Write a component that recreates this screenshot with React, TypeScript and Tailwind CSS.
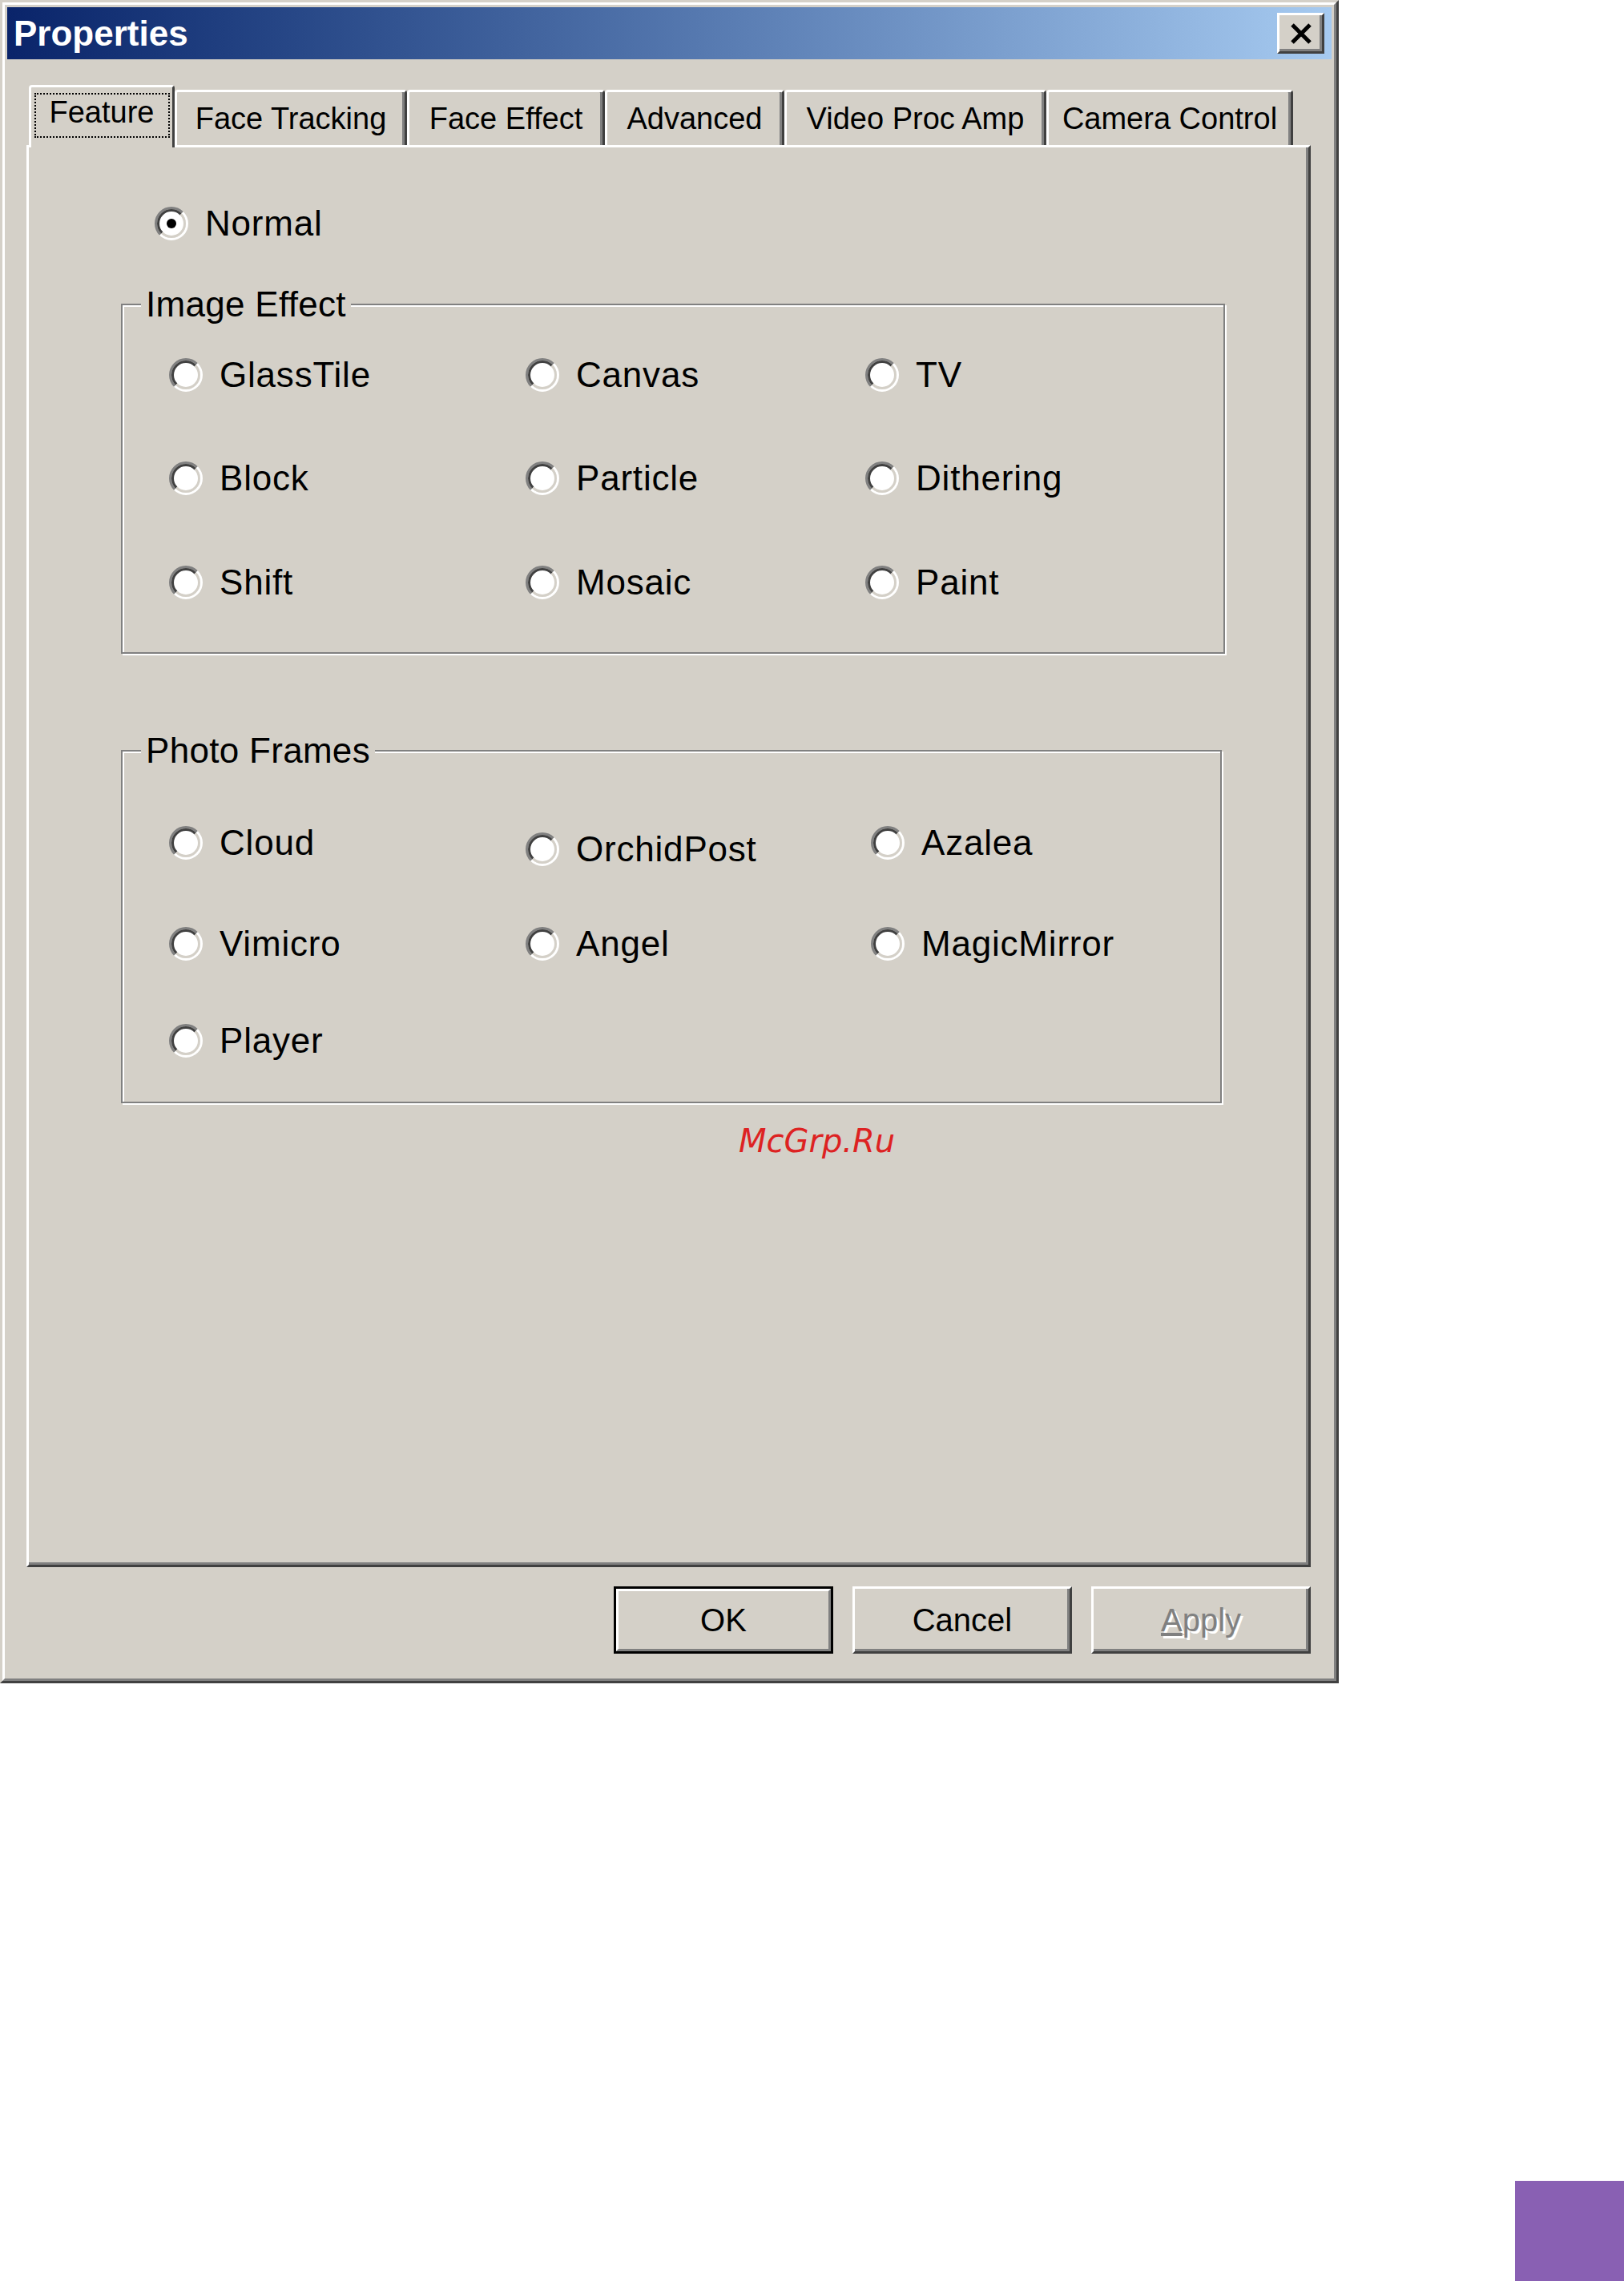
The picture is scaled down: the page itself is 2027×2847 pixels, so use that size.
import React from 'react';

type Tab = { label: string; width: string };

const tabs: Tab[] = [
  { label: 'Face Tracking', width: 'w-[290px]' },
  { label: 'Face Effect', width: 'w-[247px]' },
  { label: 'Advanced', width: 'w-[224px]' },
  { label: 'Video Proc Amp', width: 'w-[327px]' },
  { label: 'Camera Control', width: 'w-[308px]' },
];

type Row = { items: { label: string; nudge?: boolean }[]; gap: string };

const imageEffectRows: Row[] = [
  { items: [{ label: 'GlassTile' }, { label: 'Canvas' }, { label: 'TV' }], gap: 'mt-[38px]' },
  { items: [{ label: 'Block' }, { label: 'Particle' }, { label: 'Dithering' }], gap: 'mt-[79px]' },
  { items: [{ label: 'Shift' }, { label: 'Mosaic' }, { label: 'Paint' }], gap: 'mt-[80px]' },
];

const photoFrameRows: Row[] = [
  { items: [{ label: 'Cloud' }, { label: 'OrchidPost', nudge: true }, { label: 'Azalea' }], gap: 'mt-[65px]' },
  { items: [{ label: 'Vimicro' }, { label: 'Angel' }, { label: 'MagicMirror' }], gap: 'mt-[76px]' },
  { items: [{ label: 'Player' }], gap: 'mt-[71px]' },
];

// classic win2k radio: sunken ring, white well
function Radio({ checked }: { checked?: boolean }) {
  return (
    <svg width="42" height="42" viewBox="0 0 42 42" className="shrink-0">
      <circle cx="21" cy="21" r="18" fill="#ffffff" />
      <path d="M7.21 34.79 A19.5 19.5 0 0 1 34.79 7.21" fill="none" stroke="#808080" strokeWidth="3" />
      <path d="M34.79 7.21 A19.5 19.5 0 0 1 7.21 34.79" fill="none" stroke="#ffffff" strokeWidth="3" />
      <path d="M9.33 32.67 A16.5 16.5 0 0 1 32.67 9.33" fill="none" stroke="#404040" strokeWidth="3" />
      <path d="M32.67 9.33 A16.5 16.5 0 0 1 9.33 32.67" fill="none" stroke="#d4d0c8" strokeWidth="3" />
      {checked && <circle cx="21" cy="21" r="6" fill="#000000" />}
    </svg>
  );
}

function Option({ label, checked, nudge }: { label: string; checked?: boolean; nudge?: boolean }) {
  return (
    <div className={nudge ? 'flex h-[50px] translate-y-[8px] items-center gap-[21px]' : 'flex h-[50px] items-center gap-[21px]'}>
      <Radio checked={checked} />
      <span className="text-[44px] leading-[50px] tracking-[0.8px] whitespace-nowrap">{label}</span>
    </div>
  );
}

function GroupBox({ title, width, cols, rows, bottom }: { title: string; width: string; cols: string; rows: Row[]; bottom: string }) {
  return (
    <fieldset className={`${width} border-2 border-[#808080] shadow-[inset_2px_2px_0_0_#ffffff,2px_2px_0_0_#ffffff]`}>
      <legend className="ml-[23px] bg-[#d4d0c8] px-[6px] text-[44px] leading-[50px] tracking-[0.3px]">{title}</legend>
      <div className={`pl-[58px] ${bottom}`}>
        {rows.map((row, i) => (
          <div key={i} className={`grid ${cols} ${row.gap}`}>
            {row.items.map((it) => (
              <Option key={it.label} label={it.label} nudge={it.nudge} />
            ))}
          </div>
        ))}
      </div>
    </fieldset>
  );
}

export default function App() {
  return (
    <div className="flex min-h-[2847px] w-full flex-col bg-white font-['Liberation_Sans',Arial,sans-serif] text-black">
      {/* dialog frame */}
      <div className="h-[2101px] w-[1671px] border-[3px] border-t-[#d4d0c8] border-l-[#d4d0c8] border-r-[#404040] border-b-[#404040] bg-[#d4d0c8]">
        <div className="flex h-full flex-col border-[3px] border-t-white border-l-white border-r-[#808080] border-b-[#808080] p-[3px]">
          {/* title bar */}
          <div className="flex h-[65px] shrink-0 items-center justify-between bg-linear-to-r from-[#0a246a] to-[#a6caf0] pl-[8px] pr-[9px]">
            <span className="text-[44px] font-bold leading-none text-white">Properties</span>
            <div className="flex h-[51px] w-[59px] items-center justify-center border-[3px] border-t-white border-l-white border-r-[#404040] border-b-[#404040] bg-[#d4d0c8] shadow-[inset_-3px_-3px_0_0_#808080]">
              <svg width="30" height="26" viewBox="0 0 30 26">
                <path d="M4 2 L26 24 M26 2 L4 24" stroke="#000000" strokeWidth="5" />
              </svg>
            </div>
          </div>

          <div className="flex flex-1 flex-col pb-[28px] pl-[24px] pr-[26px] pt-[32px]">
            {/* tabs */}
            <div className="relative z-10 flex h-[75px] shrink-0 items-end pl-[3px]">
              <div className="relative z-10 -mb-[3px] flex h-[78px] w-[182px] shrink-0 flex-col items-center rounded-t-[4px] border-l-[3px] border-r-[3px] border-t-[3px] border-l-white border-r-[#404040] border-t-white bg-[#d4d0c8] pt-[7px]">
                <span className="flex h-[56px] w-[169px] justify-center border-2 border-dotted border-black text-[38px] leading-[44px]">
                  Feature
                </span>
              </div>
              {tabs.map((t) => (
                <div
                  key={t.label}
                  className={`${t.width} flex h-[69px] shrink-0 items-center justify-center rounded-t-[4px] border-l-[3px] border-r-[3px] border-t-[3px] border-l-white border-r-[#404040] border-t-white text-[38px] leading-[44px] whitespace-nowrap shadow-[inset_-3px_0_0_0_#808080]`}
                >
                  {t.label}
                </div>
              ))}
            </div>

            {/* page */}
            <div className="flex flex-1 flex-col border-[3px] border-t-white border-l-white border-r-[#404040] border-b-[#404040] pl-[115px] pt-[70px] shadow-[inset_-3px_-3px_0_0_#808080]">
              <div className="ml-[42px]">
                <Option label="Normal" checked />
              </div>
              <div className="mt-[51px]">
                <GroupBox
                  title="Image Effect"
                  width="w-[1378px]"
                  cols="grid-cols-[445px_424px_1fr]"
                  rows={imageEffectRows}
                  bottom="pb-[62px]"
                />
              </div>
              <div className="mt-[96px]">
                <GroupBox
                  title="Photo Frames"
                  width="w-[1374px]"
                  cols="grid-cols-[445px_431px_1fr]"
                  rows={photoFrameRows}
                  bottom="pb-[51px]"
                />
              </div>
              <div className="ml-[771px] mt-[23px] font-['DejaVu_Sans',sans-serif] text-[40px] italic leading-[48px] text-[#dd2222]">
                McGrp.Ru
              </div>
            </div>

            {/* buttons */}
            <div className="mt-[24px] flex h-[84px] shrink-0 justify-end gap-[24px] text-[40px]">
              <div className="h-[84px] w-[274px] border-[3px] border-black">
                <div className="flex h-full items-center justify-center border-[3px] border-t-white border-l-white border-r-[#808080] border-b-[#808080]">
                  OK
                </div>
              </div>
              <div className="flex h-[84px] w-[274px] items-center justify-center border-[3px] border-t-white border-l-white border-r-[#404040] border-b-[#404040] shadow-[inset_-3px_-3px_0_0_#808080]">
                Cancel
              </div>
              <div className="flex h-[84px] w-[274px] items-center justify-center border-[3px] border-t-white border-l-white border-r-[#404040] border-b-[#404040] text-[#808080] shadow-[inset_-3px_-3px_0_0_#808080] [text-shadow:3px_3px_0_#ffffff]">
                <span>
                  <span className="underline">A</span>pply
                </span>
              </div>
            </div>
          </div>
        </div>
      </div>

      <div className="ml-auto mt-[621px] h-[125px] w-[136px] bg-[#8960b3]" />
    </div>
  );
}
